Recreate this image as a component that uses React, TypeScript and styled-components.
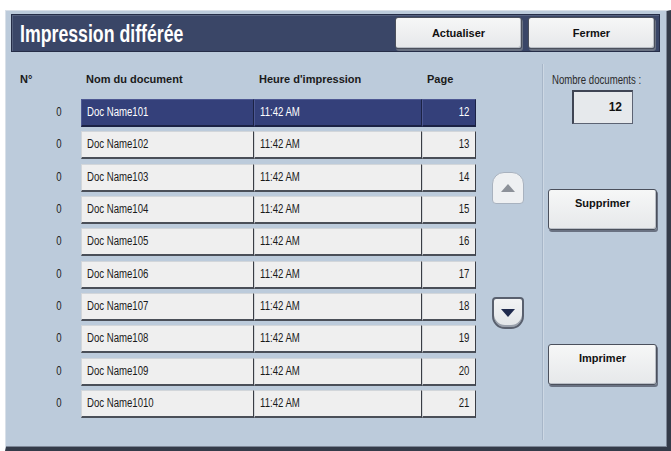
import React from "react";
import styled, { createGlobalStyle, css } from "styled-components";

const Global = createGlobalStyle`
  html, body { margin: 0; padding: 0; background: #ffffff; }
  body { font-family: "Liberation Sans", Arial, sans-serif; }
  * { box-sizing: border-box; }
`;

const Frame = styled.div`
  margin: 10px 0 0 5px;
  width: 666px;
  height: 441px;
  background: #bccbdb;
  border-left: 1px solid #d9e0e8;
  border-top: 1px solid #d9e0e8;
  border-right: 4px solid #343b49;
  border-bottom: 4px solid #343b49;
  box-shadow: inset -1px -1px 0 #7d8797;
  display: flex;
  flex-direction: column;
`;

const TitleBar = styled.div`
  margin: 3px 0 0 5px;
  width: 649px;
  height: 38px;
  background: #3a4667;
  border: 1px solid #252d47;
  box-shadow: inset 1px 1px 0 #56627f;
  display: flex;
  align-items: flex-start;
  padding: 2px 4px 0 8px;
`;

const Title = styled.h1`
  margin: 0;
  flex: 1;
  align-self: center;
  color: #ffffff;
  font-family: "Liberation Sans", Arial, sans-serif;
  font-weight: bold;
  font-size: 23px;
  line-height: 26px;
  white-space: nowrap;
  transform: scaleX(0.77);
  transform-origin: left center;
`;

const bevel = css`
  background: linear-gradient(#f6f7f7, #e6e8ea);
  border: 1px solid #4b505c;
  border-radius: 3px;
  box-shadow: 1px 2px 0 #6a7282, inset -1px -1px 0 #b9bec6;
  color: #111;
  font-family: "Liberation Sans", Arial, sans-serif;
  font-weight: bold;
  font-size: 11px;
  cursor: pointer;
`;

const BarButton = styled.button`
  ${bevel};
  width: 127px;
  height: 32px;
  margin-left: 6px;
  padding: 0;
`;

const Main = styled.div`
  flex: 1;
  display: flex;
`;

const TableArea = styled.div`
  width: 536px;
  padding-top: 14px;
  display: flex;
  flex-direction: column;
`;

const cols = css`
  display: grid;
  grid-template-columns: 75px 173px 168px 54px;
`;

const HeaderRow = styled.div`
  ${cols};
  height: 26px;
  margin-bottom: 7px;
  align-items: center;
  font-weight: bold;
  font-size: 11px;
  color: #1a1a1a;
`;

const HeaderCell = styled.div<{ $first?: boolean }>`
  padding-left: ${(p) => (p.$first ? "14px" : "5px")};
  white-space: nowrap;
`;

/* narrow text: the device font is a condensed sans */
const Txt = styled.span<{ $right?: boolean }>`
  display: inline-block;
  vertical-align: top;
  white-space: nowrap;
  transform: scaleX(0.8);
  transform-origin: ${(p) => (p.$right ? "right center" : "left center")};
`;

const Body = styled.div`
  display: flex;
`;

const List = styled.div`
  display: flex;
  flex-direction: column;
  gap: 4.33px;
`;

const Row = styled.div`
  ${cols};
  height: 28px;
`;

const Num = styled.div`
  text-align: right;
  padding-right: 19px;
  font-size: 12px;
  line-height: 27px;
  color: #222;
`;

const Cell = styled.div<{ $sel?: boolean; $right?: boolean }>`
  height: 28px;
  font-size: 12px;
  line-height: 25px;
  padding: 0 ${(p) => (p.$right ? "6px" : "4px")} 0 5px;
  text-align: ${(p) => (p.$right ? "right" : "left")};
  white-space: nowrap;
  overflow: hidden;
  color: ${(p) => (p.$sel ? "#ffffff" : "#1a1a1a")};
  background: ${(p) => (p.$sel ? "#34407a" : "#efefef")};
  border-top: 1px solid ${(p) => (p.$sel ? "#4d5893" : "#d2d6da")};
  border-left: 1px solid ${(p) => (p.$sel ? "#4d5893" : "#d2d6da")};
  border-right: 1px solid ${(p) => (p.$sel ? "#1b2244" : "#3a3d44")};
  border-bottom: 2px solid ${(p) => (p.$sel ? "#1b2244" : "#4a4f58")};
`;

const ScrollCol = styled.div`
  display: flex;
  flex-direction: column;
  margin-left: 16px;
  padding-top: 73px;
  gap: 93px;
`;

const ScrollButton = styled.button<{ $down?: boolean }>`
  width: 32px;
  height: 32px;
  padding: 0;
  display: flex;
  align-items: center;
  justify-content: center;
  background: ${(p) => (p.$down ? "linear-gradient(#f2f3f4, #e2e5e8)" : "#eef0f2")};
  border: ${(p) => (p.$down ? "2px solid #59606e" : "1px solid #a8b2bf")};
  border-radius: ${(p) => (p.$down ? "4px 4px 13px 13px" : "12px 12px 4px 4px")};
  box-shadow: ${(p) => (p.$down ? "inset 0 -2px 0 #9aa1ac" : "none")};
`;

const Separator = styled.div`
  width: 1px;
  margin: 12px 0 7px;
  background: #a7b6c8;
  box-shadow: 1px 0 0 #cdd8e4;
`;

const Side = styled.div`
  width: 124px;
  padding-top: 22px;
  display: flex;
  flex-direction: column;
`;

const CountLabel = styled.div`
  padding-left: 9px;
  font-size: 12px;
  line-height: 13px;
  color: #2a2a2a;
  white-space: nowrap;
`;

const CountBox = styled.div`
  margin: 3px 0 0 29px;
  width: 61px;
  height: 34px;
  background: #e6e9ec;
  border-top: 2px solid #3f4554;
  border-left: 2px solid #3f4554;
  border-right: 1px solid #5c6373;
  border-bottom: 1px solid #5c6373;
  text-align: right;
  padding-right: 10px;
  line-height: 30px;
  font-weight: bold;
  font-size: 12px;
  color: #111;
`;

const SideButton = styled.button<{ $gap: number }>`
  ${bevel};
  width: 109px;
  height: 41px;
  margin: ${(p) => p.$gap}px 0 0 5px;
  padding: 7px 0 0;
  display: flex;
  justify-content: center;
  align-items: flex-start;
  line-height: 12px;
`;

const rows = Array.from({ length: 10 }, (_, i) => ({
  name: `Doc Name10${i + 1}`,
  time: "11:42 AM",
  page: 12 + i,
}));

export default function App() {
  return (
    <>
      <Global />
      <Frame>
        <TitleBar>
          <Title>Impression différée</Title>
          <BarButton>Actualiser</BarButton>
          <BarButton>Fermer</BarButton>
        </TitleBar>
        <Main>
          <TableArea>
            <HeaderRow>
              <HeaderCell $first>N°</HeaderCell>
              <HeaderCell>Nom du document</HeaderCell>
              <HeaderCell>Heure d'impression</HeaderCell>
              <HeaderCell>Page</HeaderCell>
            </HeaderRow>
            <Body>
              <List>
                {rows.map((r, i) => (
                  <Row key={r.name}>
                    <Num>
                      <Txt $right>0</Txt>
                    </Num>
                    <Cell $sel={i === 0}>
                      <Txt>{r.name}</Txt>
                    </Cell>
                    <Cell $sel={i === 0}>
                      <Txt>{r.time}</Txt>
                    </Cell>
                    <Cell $sel={i === 0} $right>
                      <Txt $right>{r.page}</Txt>
                    </Cell>
                  </Row>
                ))}
              </List>
              <ScrollCol>
                <ScrollButton aria-label="up">
                  <svg width="14" height="8" viewBox="0 0 14 8">
                    <polygon points="0,8 14,8 7,0" fill="#8c9199" />
                  </svg>
                </ScrollButton>
                <ScrollButton $down aria-label="down">
                  <svg width="14" height="8" viewBox="0 0 14 8">
                    <polygon points="0,0 14,0 7,8" fill="#1f2a4d" />
                  </svg>
                </ScrollButton>
              </ScrollCol>
            </Body>
          </TableArea>
          <Separator />
          <Side>
            <CountLabel>
              <Txt>Nombre documents :</Txt>
            </CountLabel>
            <CountBox>12</CountBox>
            <SideButton $gap={65}>Supprimer</SideButton>
            <SideButton $gap={114}>Imprimer</SideButton>
          </Side>
        </Main>
      </Frame>
    </>
  );
}
